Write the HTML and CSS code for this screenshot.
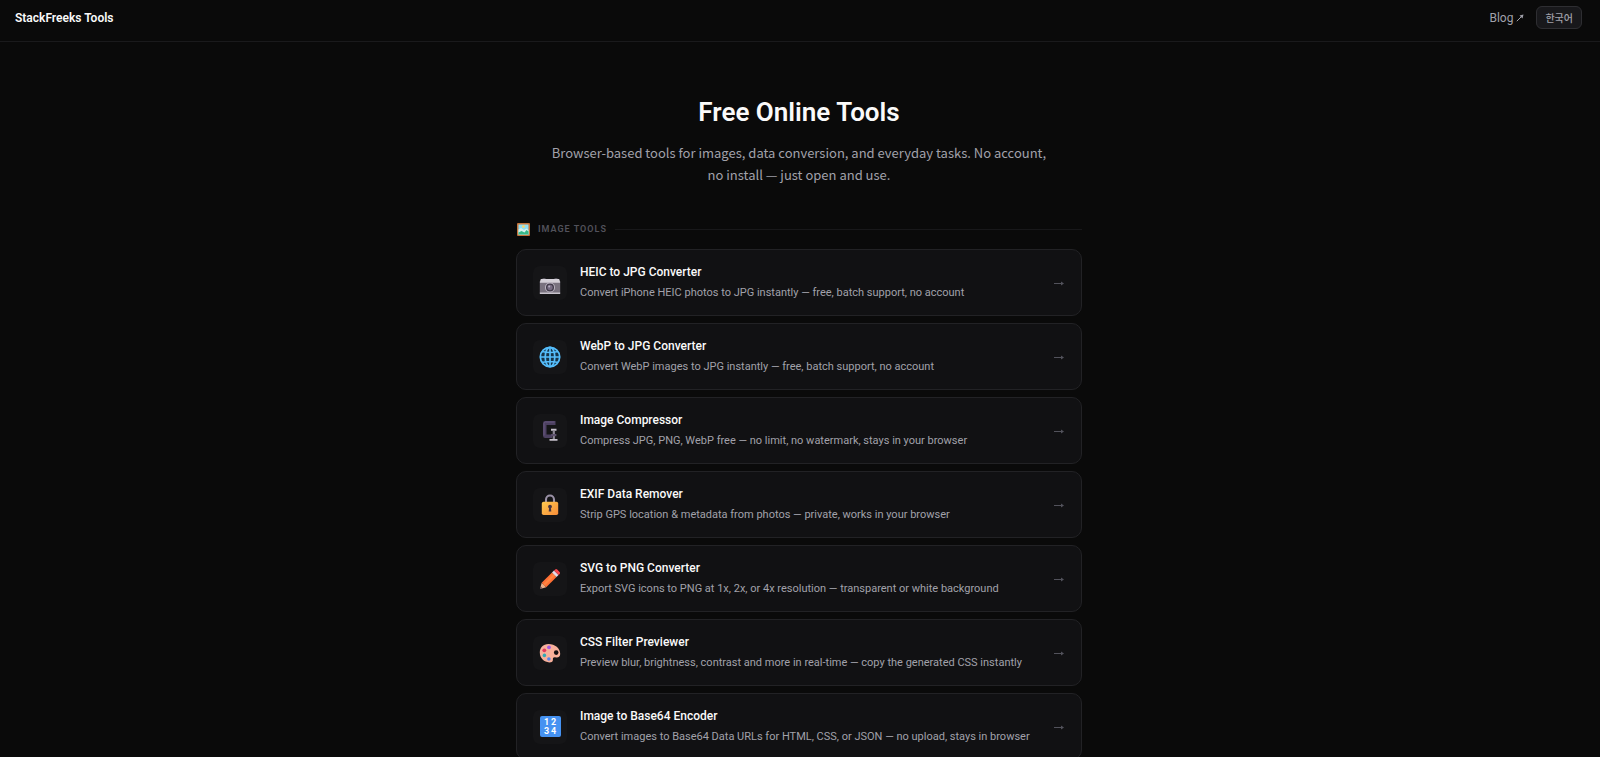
FILE: index.html
```
<!DOCTYPE html>
<html lang="en">
<head>
    <meta charset="UTF-8">
    <meta name="viewport" content="width=device-width, initial-scale=1.0">
    <title>StackFreeks Tools</title>
    <link rel="stylesheet" href="styles.css">
</head>
<body>
    <header class="site-header">
        <a class="brand" href="#">StackFreeks Tools</a>
        <nav class="site-nav">
            <a class="nav-link" href="#">Blog <svg width="8" height="8" viewBox="0 0 8 8" aria-hidden="true"><path d="M.8 7.2 5.5 2.5" fill="none" stroke="currentColor"/><path d="M7.5.5 6.5 4.5 3.5 1.5z" fill="currentColor"/></svg></a>
            <button class="lang" type="button" lang="ko">한국어</button>
        </nav>
    </header>

    <main>
        <section class="hero">
            <h1>Free Online Tools</h1>
            <p>Browser-based tools for images, data conversion, and everyday tasks. No account, no install — just open and use.</p>
        </section>

        <section class="category">
            <h2>
                <svg width="13" height="13" viewBox="0 0 13 13" aria-hidden="true">
                    <rect width="13" height="13" rx="1" fill="#c4733a"/>
                    <rect x="1.5" y="1.5" width="10" height="10" fill="#8fe0f5"/>
                    <circle cx="6.5" cy="3.6" r="1.4" fill="#ffd76a"/>
                    <path d="M1.5 6.5 4 5l3 2 2.5-1.5 2 1.5v4.5h-10z" fill="#d5f3f0"/>
                    <path d="M1.5 9.5 4.5 8l3 1.5 2-2.5 2 1.5v3h-10z" fill="#37b98a"/>
                </svg>
                <span>Image Tools</span>
            </h2>

            <div class="tools">
                <a class="tool" href="#">
                    <span class="icon">
                        <svg width="22" height="22" viewBox="0 -2.5 22 22" aria-hidden="true">
                            <path d="M3.5 4h3v2h-3zM15.5 4h3v2h-3z" fill="#8d8793"/>
                            <rect x=".8" y="6" width="20.4" height="13" rx="1" fill="#79727f"/>
                            <path d="M1.8 4.6h18.4l1 3.6H.8z" fill="#d4d0d8"/>
                            <path d="M.8 18h20.4v1.5H.8z" fill="#c9c4cd"/>
                            <circle cx="11" cy="13" r="5" fill="#bdb6c4"/>
                            <circle cx="11" cy="13" r="4" fill="#3f3948"/>
                            <circle cx="11" cy="13" r="2.7" fill="#776c83"/>
                            <circle cx="10.2" cy="12" r="1" fill="#b8b0c2"/>
                        </svg>
                    </span>
                    <span class="info">
                        <strong>HEIC to JPG Converter</strong>
                        <span class="desc">Convert iPhone HEIC photos to JPG instantly — free, batch support, no account</span>
                    </span>
                    <svg class="arrow" width="11" height="6" viewBox="0 0 11 6" aria-hidden="true"><path d="M0 3.5h8" fill="none" stroke="currentColor"/><path d="M7 1.5 10 3.5 7 5.5z" fill="currentColor"/></svg>
                </a>

                <a class="tool" href="#">
                    <span class="icon">
                        <svg width="22" height="22" viewBox="0 0 22 22" aria-hidden="true">
                            <circle cx="11" cy="11" r="10.4" fill="#163247"/>
                            <g fill="none" stroke="#55bdfb" stroke-width="1.7">
                                <circle cx="11" cy="11" r="9.7"/>
                                <ellipse cx="11" cy="11" rx="4.8" ry="9.7"/>
                                <path d="M11 1.2v19.6M1.2 11h19.6M3 5.5q8 2 16 0M3 16.5q8-2 16 0"/>
                            </g>
                        </svg>
                    </span>
                    <span class="info">
                        <strong>WebP to JPG Converter</strong>
                        <span class="desc">Convert WebP images to JPG instantly — free, batch support, no account</span>
                    </span>
                    <svg class="arrow" width="11" height="6" viewBox="0 0 11 6" aria-hidden="true"><path d="M0 3.5h8" fill="none" stroke="currentColor"/><path d="M7 1.5 10 3.5 7 5.5z" fill="currentColor"/></svg>
                </a>

                <a class="tool" href="#">
                    <span class="icon">
                        <svg width="22" height="22" viewBox="0 0 22 22" aria-hidden="true">
                            <path d="M16.5 1v4h-9v9.5H13V18H6.2Q4 18 4 15.8V3.2Q4 1 6.2 1z" fill="#4c4060"/>
                            <path d="M5 15.5V3.5Q5 2 6.5 2h9" fill="none" stroke="#66577e"/>
                            <path d="M12 8.7h5.5v2H12zM10.5 19h8v1.8h-8z" fill="#c5c0ca"/>
                            <path d="M13.7 10.7h2.2V19h-2.2z" fill="#8d8796"/>
                            <path d="M12.2 14h5.2v2.2h-5.2z" fill="#5d516d"/>
                        </svg>
                    </span>
                    <span class="info">
                        <strong>Image Compressor</strong>
                        <span class="desc">Compress JPG, PNG, WebP free — no limit, no watermark, stays in your browser</span>
                    </span>
                    <svg class="arrow" width="11" height="6" viewBox="0 0 11 6" aria-hidden="true"><path d="M0 3.5h8" fill="none" stroke="currentColor"/><path d="M7 1.5 10 3.5 7 5.5z" fill="currentColor"/></svg>
                </a>

                <a class="tool" href="#">
                    <span class="icon">
                        <svg width="22" height="22" viewBox="0 0 22 22" aria-hidden="true">
                            <defs>
                                <linearGradient id="lock" x1="0" y1="0" x2="1" y2="1">
                                    <stop offset="0" stop-color="#ffcb4f"/>
                                    <stop offset="1" stop-color="#f78b38"/>
                                </linearGradient>
                            </defs>
                            <path d="M7 9V5.5a4 4 0 0 1 8 0V9" fill="none" stroke="#9a91a6" stroke-width="2.1"/>
                            <rect x="2.8" y="7.8" width="16.4" height="13.2" rx="1.8" fill="url(#lock)"/>
                            <circle cx="11" cy="12.6" r="1.9" fill="#493641"/>
                            <path d="M10.2 13h1.6l.5 4.5H9.7z" fill="#493641"/>
                        </svg>
                    </span>
                    <span class="info">
                        <strong>EXIF Data Remover</strong>
                        <span class="desc">Strip GPS location &amp; metadata from photos — private, works in your browser</span>
                    </span>
                    <svg class="arrow" width="11" height="6" viewBox="0 0 11 6" aria-hidden="true"><path d="M0 3.5h8" fill="none" stroke="currentColor"/><path d="M7 1.5 10 3.5 7 5.5z" fill="currentColor"/></svg>
                </a>

                <a class="tool" href="#">
                    <span class="icon">
                        <svg width="22" height="22" viewBox="0 0 22 22" aria-hidden="true">
                            <path d="M1 21 2.7 14.8 7.2 19.3z" fill="#e9b08b"/>
                            <path d="M1 21l.7-2.4 1.7 1.7z" fill="#5c4350"/>
                            <path d="M2.7 14.8 13 4.5 17.5 9 7.2 19.3z" fill="#ff7035"/>
                            <path d="M4.2 16.3 14.5 6l1.5 1.5L5.7 17.8z" fill="#ff8540"/>
                            <path d="M13 4.5 15 2.5 19.5 7 17.5 9z" fill="#e5dce9"/>
                            <path d="M15 2.5l1.2-1.1q1-.8 2 .1l2.4 2.4q.9 1 .1 2L19.5 7z" fill="#f8494f"/>
                        </svg>
                    </span>
                    <span class="info">
                        <strong>SVG to PNG Converter</strong>
                        <span class="desc">Export SVG icons to PNG at 1x, 2x, or 4x resolution — transparent or white background</span>
                    </span>
                    <svg class="arrow" width="11" height="6" viewBox="0 0 11 6" aria-hidden="true"><path d="M0 3.5h8" fill="none" stroke="currentColor"/><path d="M7 1.5 10 3.5 7 5.5z" fill="currentColor"/></svg>
                </a>

                <a class="tool" href="#">
                    <span class="icon">
                        <svg width="22" height="22" viewBox="0 0 22 22" aria-hidden="true">
                            <path d="M9.5 2C4 2 .8 5.8.8 10.6c0 5.6 4.4 9.8 9.5 9.8 2.7 0 3.8-1.3 3.6-3-.2-1.8.8-2.4 3-2 2.7.4 4.3-.9 4.3-3.7C21.2 6.3 16 2 9.5 2z" fill="#f8b09b"/>
                            <circle cx="17.2" cy="10.6" r="2.3" fill="#130e12"/>
                            <circle cx="10" cy="5.3" r="1.9" fill="#a45be0"/>
                            <circle cx="5.3" cy="8.3" r="1.9" fill="#e5395c"/>
                            <circle cx="5.4" cy="13.4" r="1.8" fill="#35a9b5"/>
                            <circle cx="9.9" cy="17" r="1.8" fill="#5a83e6"/>
                        </svg>
                    </span>
                    <span class="info">
                        <strong>CSS Filter Previewer</strong>
                        <span class="desc">Preview blur, brightness, contrast and more in real-time — copy the generated CSS instantly</span>
                    </span>
                    <svg class="arrow" width="11" height="6" viewBox="0 0 11 6" aria-hidden="true"><path d="M0 3.5h8" fill="none" stroke="currentColor"/><path d="M7 1.5 10 3.5 7 5.5z" fill="currentColor"/></svg>
                </a>

                <a class="tool" href="#">
                    <span class="icon">
                        <span class="digits"><span>1</span><span>2</span><span>3</span><span>4</span></span>
                    </span>
                    <span class="info">
                        <strong>Image to Base64 Encoder</strong>
                        <span class="desc">Convert images to Base64 Data URLs for HTML, CSS, or JSON — no upload, stays in browser</span>
                    </span>
                    <svg class="arrow" width="11" height="6" viewBox="0 0 11 6" aria-hidden="true"><path d="M0 3.5h8" fill="none" stroke="currentColor"/><path d="M7 1.5 10 3.5 7 5.5z" fill="currentColor"/></svg>
                </a>
            </div>
        </section>
    </main>
</body>
</html>
```
FILE: styles.css
```
* {
    box-sizing: border-box;
}

body {
    margin: 0;
    background: #0a0a0a;
    color: #fafafa;
    font-family: Roboto, "Noto Sans CJK KR", sans-serif;
    font-size: 12px;
}

a {
    color: inherit;
    text-decoration: none;
}

.site-header {
    display: flex;
    justify-content: space-between;
    align-items: center;
    padding: 6px 18px 12px 15px;
    border-bottom: 1px solid #1a1a1c;
}

.brand {
    font-size: 12px;
    font-weight: 600;
}

.site-nav {
    display: flex;
    align-items: center;
    gap: 12px;
    color: #a1a1aa;
}

.nav-link {
    font-size: 12px;
}

.lang {
    height: 23px;
    padding: 0 8px;
    background: #18181b;
    border: 1px solid #2e2e32;
    border-radius: 6px;
    color: #a1a1aa;
    font-family: inherit;
    font-size: 10px;
    font-weight: 500;
    cursor: pointer;
}

main {
    max-width: 598px;
    margin: 0 auto;
    padding: 50px 17px 0 15px;
}

.hero {
    text-align: center;
}

h1 {
    margin: 0;
    font-size: 26px;
    font-weight: 600;
    line-height: 40px;
}

.hero p {
    max-width: 500px;
    margin: 10px auto 0;
    color: #a1a1aa;
    font-family: "Noto Sans CJK KR", sans-serif;
    font-size: 13px;
    line-height: 22px;
}

.category {
    margin-top: 35px;
}

h2 {
    display: flex;
    align-items: center;
    gap: 8px;
    margin: 0 0 12px;
    padding-left: 1px;
    color: #52525b;
    font-size: 9px;
    font-weight: 600;
    line-height: 16px;
    letter-spacing: 1px;
    text-transform: uppercase;
}

h2::after {
    content: "";
    flex: 1;
    height: 1px;
    background: #18181a;
}

.tools {
    display: flex;
    flex-direction: column;
    gap: 7px;
}

.tool {
    display: flex;
    align-items: center;
    gap: 13px;
    padding: 12px 16px;
    background: #111113;
    border: 1px solid #222225;
    border-radius: 10px;
}

.tool:hover {
    border-color: #3f3f46;
}

.icon {
    display: flex;
    align-items: center;
    justify-content: center;
    width: 34px;
    height: 34px;
    background: #151517;
    border-radius: 7px;
}

.digits {
    display: grid;
    grid-template-columns: 7px 7px;
    justify-content: center;
    align-content: center;
    width: 21px;
    height: 21px;
    background: #4592f2;
    border-radius: 2px;
    color: #fff;
    font-size: 9px;
    font-weight: 700;
    line-height: 9px;
    text-align: center;
}

.info {
    flex: 1;
}

.info strong {
    display: block;
    font-size: 12px;
    font-weight: 500;
    line-height: 21px;
}

.desc {
    display: block;
    color: #a1a1aa;
    font-size: 11px;
    line-height: 20px;
}

.arrow {
    color: #52525b;
}
```
